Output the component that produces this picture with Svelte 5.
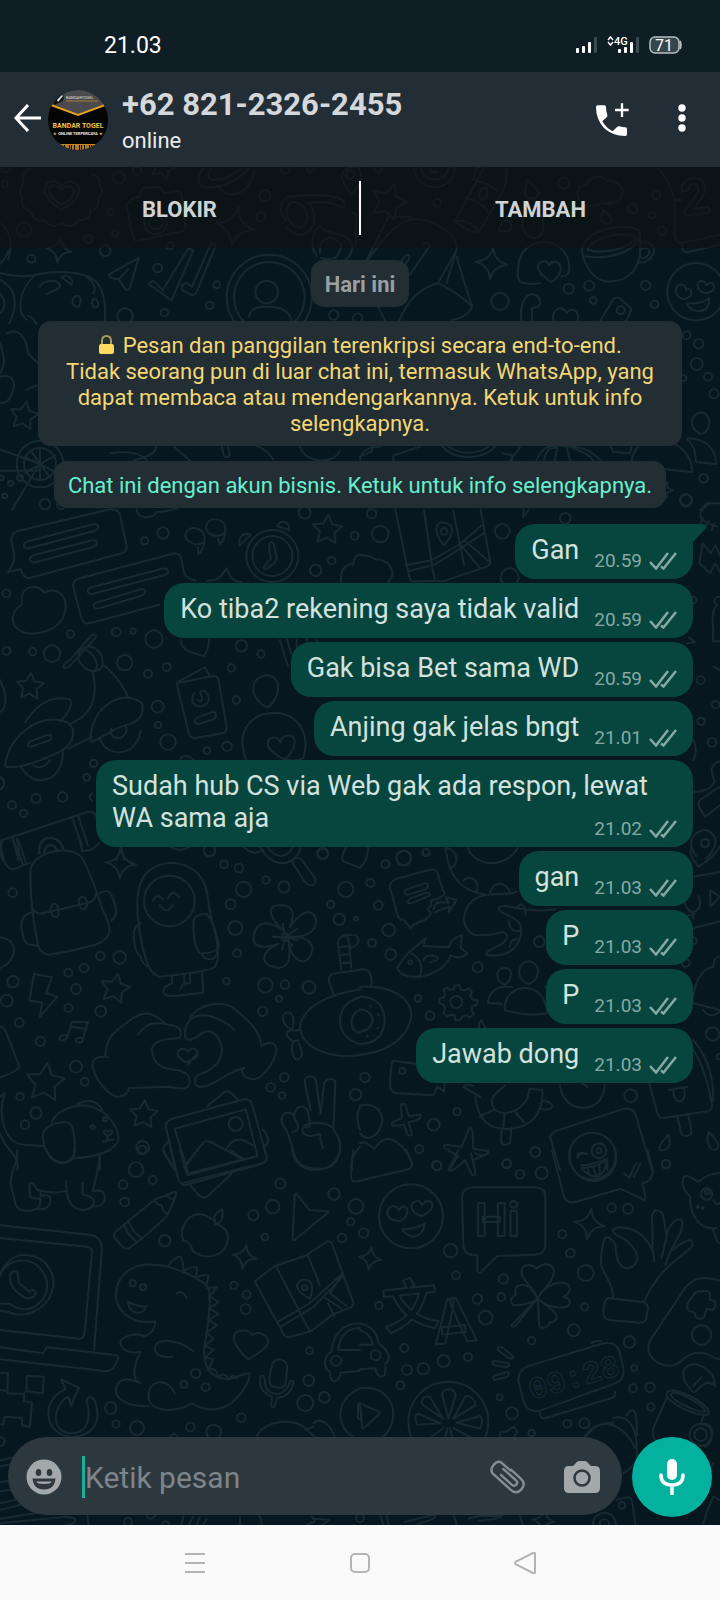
<script>
  let draft = $state('')

  const messages = [
    { text: 'Gan', time: '20.59', first: true },
    { text: 'Ko tiba2 rekening saya tidak valid', time: '20.59' },
    { text: 'Gak bisa Bet sama WD', time: '20.59' },
    { text: 'Anjing gak jelas bngt', time: '21.01' },
    { text: 'Sudah hub CS via Web gak ada respon, lewat WA sama aja', time: '21.02' },
    { text: 'gan', time: '21.03' },
    { text: 'P', time: '21.03' },
    { text: 'P', time: '21.03' },
    { text: 'Jawab dong', time: '21.03' }
  ]

  // Wallpaper doodles, grouped in tiles. Units inside a tile are a third of a pixel.
  // dots: [x, y, r], stars and sparkles: [x, y, r, rotation]
  const tiles = [
    {
      x: 0,
      y: 160,
      dots: [
        [15, 72, 9], [357, 53, 18], [411, 32, 12], [332, 156, 10], [72, 208, 21], [346, 220, 10], [265, 237, 12],
        [316, 272, 16], [94, 296, 12], [510, 257, 11], [473, 324, 13], [650, 374, 10], [629, 436, 11], [493, 458, 11],
        [375, 468, 23], [795, 107, 17], [782, 170, 13], [857, 28, 13], [932, 24, 12], [1050, 45, 12], [1001, 465, 14],
        [1073, 474, 14], [18, 22, 14], [467, 188, 34], [467, 188, 20], [800, 396, 34], [808, 412, 128], [808, 412, 106],
        [120, 912, 70], [120, 912, 48], [60, 954, 9], [32, 970, 8], [4, 954, 7], [14, 1008, 7], [135, 1032, 16], [184, 1034, 13]
      ],
      stars: [[72, 768, 44, 10], [490, 20, 40, 20]],
      sparkles: [[177, 270, 38, 8], [705, 200, 60, 10]],
      paths: [
        'M90 26C60 40 75 60 66 78c-14 20 4 32 0 46 -2 24 22 24 30 34 2 26 24 26 40 24 14 20 34 20 48 8 20 14 42 8 50-10 22 4 38-8 36-26 22-8 30-22 22-36 18-14 18-28 6-40 4-20-6-32-22-34',
        'M184 150c-30-20-52-40-50-64 6-28 36-28 50-8 16-18 46-18 54 10 0 26-26 46-54 62z',
        'M184 134c-20-14-38-28-36-46 6-16 26-16 36 2 12-16 34-14 38 2 0 18-18 32-38 42z',
        'M392 118l26-8 6-18q3-7 10-8l38-4q8 0 12 6l8 14 36-6q16-2 18 14l10 90q2 14-12 16l-128 28q-14 2-18-12l-18-88q-2-14 12-16z',
        'M610 26c-18 20-26 56 14 56 46 0 96-24 122-56M634 26c-12 16-14 34 10 34 30 0 50-12 80-34M650 78c40 50 106 20 112-48',
        'M416 294l-90 50q2 12 30 14l20 30q12 4 14-6zM356 358l28-30',
        'M446 372l14-10 28 28 78-126 14 8-66 150-26-20zM546 376l12-8 18 12 58-132 14 6-60 146-10 6-30-14z',
        'M746 470c10-34 40-30 60-30 30 0 60 10 68 40',
        'M0 340c40 10 80 12 120 2 40-10 100-8 140 6 40 14 60 60 54 134M0 312c10-10 20-26 26-40M0 190c30 20 40 60 24 110M0 360c40 20 60 60 28 130M0 400c16 20 20 40 0 60',
        'M100 350c-30 30-44 70-36 110l16 20M120 380c10-24 60-24 60 0-10 14-26 10-40 24M184 350c20-10 40 10 30 24zM218 418c10-20 30-10 22 14-8 20-26 4-22-14zM278 420c8-10 24 10 12 22-10 4-18-10-12-22M260 350c20 16 30 36 20 50M84 468c20 4 20 20 26 24',
        'M20 520c40-20 60 20 64 60 20 20 30 30 30 30M0 550c10 30 20 60 0 90M0 650c40-10 50 20 36 50 -10 24-20 30-36 30',
        'M80 690c10-8 20-10 34-14',
        'M0 868l120 44M0 932h114M116 916l-80 134M120 862v100M74 890l92 46M76 938l90-52M92 872l58 80',
        'M470 858c-6 30-40 34-70 44M330 880c60-10 90 0 110 20M520 858l50 44M666 862l6 26q8 8 18-2l-6-26M770 858c30 10 40 30 50 40M900 858c10 50 100 60 120 14M1080 900c0-20 20-40 60-40',
        'M860 180c-30-20-20-64 10-70 90-12 150 0 162 14 6 20-4 22-14 14-30-14-60-14-92-10 30 40 16 88-20 96-20 2-40-8-46-26M860 160c0-60 60-30 62 10 0 44-50 44-62-10M950 288c-20-30-18-70 10-90 8 30 100 10 96 70 -10 40-40 40-50 30M960 280c-6-50 40-60 64-26 -4 40-30 50-60 40M1054 160q16-6 14 14v84',
        'M1060 20c-50 10-40 40-6 84 30-30 36-60 20-84'
      ]
    },
    {
      x: 360,
      y: 160,
      dots: [
        [232, 128, 12], [611, 69, 17], [889, 106, 12], [818, 146, 14], [876, 166, 9], [906, 212, 13], [626, 386, 15],
        [688, 377, 15], [700, 421, 10], [857, 376, 14], [884, 433, 11], [420, 424, 26], [782, 451, 12], [1008, 395, 86],
        [980, 526, 12], [1016, 551, 14], [1010, 612, 18], [1044, 650, 12], [970, 654, 9], [1062, 701, 14], [1031, 955, 13],
        [978, 1019, 17], [53, 24, 12]
      ],
      stars: [[86, 126, 56, 18], [912, 990, 26, 20]],
      sparkles: [[395, 310, 48, 6]],
      paths: [
        'M162 24c8 76 118 76 122 0M182 24c10 46 74 46 84 0M214 24q-6 20 18 10M340 60c10-40 10-40 20-40M440 24c0 60-10 70-30 100l-52 92q-8 12-74-32l90-164M346 62c30 4 50 16 68 32M316 114c30 6 54 20 68 42M284 186q12-10 40 2t30 30M370 84c20-6 14 34-4 36-14-4-8-30 4-36z',
        'M500 58c20 20 38 30 36 44-10 20-36 18-40 0-2-16 6-30 4-44zM440 176c-30 30-30 40-6 38 24 0 28-20 6-38M500 150c-30 50 0 84 20 84 30 0 40-40 20-74M730 150c30 24 28 42 10 42-20-4-20-22-10-42z',
        'M670 136c-30-30-20-60 10-60 10-34 50-30 60-14 60 0 60 60 20 68-20-10-50 16-90 6zM760 130c-20 10-30 0-36-6',
        'M890 24c30 20 50 80 54 100v100q4 30 26 24l110-24M944 120h20M964 250q4 30 20 26l96-22',
        'M24 300c40-60 90-120 140-124q60 6 100 40 30 20 26 54l-56 100q-80 20-116 112M54 440l20 40M288 274l-28 96M290 290q30 100 46 150-10 30-60 40M236 370q60 30 96 66M190 252q20-6 20 4l-60 88M144 284q10 6-2 20l-20 32q-8 6-10 0l16-40q8-12 16-12M20 300l66-130h70',
        'M474 330c0-110 148-110 154-10 2 20-10 30-24 30M480 366c-8-10-8-20-6-36M480 366q30 10 60 4M574 366c-30-20-50-40-36-56 10-10 24-10 30 6 10-20 34-10 34 10 0 18-12 30-28 40z',
        'M666 272c0-70 160-90 174-54 4 46-80 86-172 70zM682 270c10-40 120-60 146-36-20 30-90 50-146 36zM668 288c20 60 50 80 90 76 50-4 80-40 82-90v-50M836 256c20-20 54-4 44 26-10 20-30 30-44 24M840 270c16-12 34-4 26 14-8 10-20 14-26 6z',
        'M484 480c-8-90 50-90 56-56 6 14-10 20-24 20v36M580 480c-10-30 30-50 40-20 10-20 40-10 34 20M720 484l40-66q8-8 18-4l30 26q8 6 4 14l-14 30',
        'M948 384c10-18 30-10 30 6 16-10 20 10 12 20l-18 8c-16-4-28-16-24-34zM1012 374c6-18 24-12 28 2 12-16 26-4 20 14l-20 10c-14 0-26-10-28-26zM980 430q40 4 68-16 0 38-30 40-30-2-38-24z',
        'M1020 758c20-4 30 20 28 34-4 20-16 30-26 30-16-4-28-24-26-38 2-14 10-24 24-26zM980 836c50-6 90 30 88 76l-60-6c0-26-8-54-28-70zM814 904c10-60 60-70 90-60M904 844c50 0 94 40 92 92l-120-12M752 860l8 16 50 4 4-18',
        'M530 900c20-50 50-46 100-40 50 0 70 20 90 40M552 900c10-40 20-36 40-36l-8 36M620 864l10 36M640 866c20 4 50 20 60 36M246 858c40 50 130 40 160 0M264 858c40 30 90 24 124 0M480 862l-30 40M426 880l30 4v18M100 900v-14l80-26M0 890l36-16v-16M50 980v-40l40-20M1020 1050l20-20h40'
      ]
    },
    {
      x: 0,
      y: 500,
      dots: [
        [489, 99, 17], [434, 122, 11], [914, 38, 18], [1064, 107, 12], [947, 211, 17], [995, 182, 11], [19, 280, 12],
        [211, 402, 11], [349, 396, 13], [399, 393, 8], [462, 417, 26], [19, 453, 12], [98, 455, 11], [156, 461, 25],
        [374, 488, 23], [444, 521, 12], [500, 502, 12], [724, 438, 17], [783, 462, 11], [694, 504, 11], [709, 600, 11],
        [473, 620, 18], [474, 675, 10], [504, 726, 23], [621, 752, 10], [681, 739, 14], [281, 790, 11], [260, 832, 10],
        [36, 916, 12], [108, 895, 14], [188, 891, 14], [71, 940, 11], [817, 168, 78], [817, 168, 60], [629, 1052, 17],
        [968, 1060, 16]
      ],
      stars: [[982, 90, 46, 4], [90, 560, 42, 4]],
      sparkles: [],
      paths: [
        'M50 94l280-66q24-2 30 16l20 94q0 16-14 22L88 234q-16 4-26-26l-38 8q22-30 18-54l-8-44q2-18 16-24z',
        'M84 124l190-50q22-4 20 8 0 8-14 12l-190 50q-16 4-18-6t12-14zM100 166l170-44q22-4 20 8 0 8-14 12l-166 44q-16 4-20-4t10-16z',
        'M234 236l290-76q18 0 20 18l8 40q10 20 34 24M234 236q-18 8-14 26l24 92q6 20 24 16l210-56M276 262l210-56q18-2 18 8t-14 12l-204 54q-18 6-22-4t12-14zM290 308l130-40q16-2 16 6t-14 14l-122 36q-14 4-18-4t8-12z',
        'M66 314c-10-60 50-66 66-36 40-20 70 10 64 50-4 50-60 76-114 72-50-8-60-60-16-86z',
        'M612 126c-30 20-62-10-56-24 14-30 54-20 58 12 0 24-10 44-20 48v-20M676 96c-20 20-58 10-58-14 4-34 50-30 58 0 2 24-6 46-18 50l-4-16',
        'M810 128q8-6 12 8l6 28q6 16-8 28l-22 16q-10 0-6-8l20-24-4-28q-2-12 2-20zM832 78c10-20 36-16 36 12zM720 136c-6-26 10-40 32-32zM410 28c0 30 50 30 60 8 20 0 40-4 60-10M620 242c40 0 40-10 60-38 8 26 16 40 44 42M1024 250c-6-50 20-60 36-56 0-20 10-30 20-30',
        'M544 430c8 26 40 30 68 38q14-20 16-52M544 430v-10M840 420l24 80M860 416l14 44M890 420v20M920 416v16M950 420v16',
        'M284 404q10 6-6 18l-66 74q-20 16-22 2 4-10 20-18l64-74q6-4 10-2zM240 452c30-30 70 0 68 40-4 24-30 28-50 14-20-14-30-34-18-54zM254 448c30 14 50 50 26 68M308 494c30 20 60 60 78 100M278 512c14 60 10 130-66 158M272 720c-4-90 90-160 154-110 10 40-20 60-50 66-40 10-60 36-104 50zM300 712c10 60 110 66 122-20M334 686c-10 34 40 40 46 4 0-6-2-12-6-14M16 794c10-80 90-150 170-132 50 10 40 70-4 92-50 24-110 50-160 48q-8-2-6-8zM76 666c40-60 80-80 134-68 10 20-10 50-30 66M64 802c40 70 130 40 124-50M100 796c20 14 40 0 50-16M206 746l70-36M90 724l56-20q10 0 8 8l-2 8-58 20q-10 2-10-6z',
        'M536 544l78-42 16 26M530 550l110-22q14 0 16 14l24 140q0 14-12 18l-82 14q-16 0-20-16zM582 580c-10 20-6 38 20 40 26-4 30-26 16-44-14-10-20 0-14 12 10 14-8 20-12 10M592 652l46-16q10 0 10 10 0 8-8 12l-44 14q-12 0-12-8 0-8 8-12z',
        'M796 526c60 0 40 80 6 96-40-14-68-80-6-96zM738 778c-34-90 20-140 90-140 80 6 100 80 82 136q-20 12-58 4M852 778c-36-20-60-40-44-60 14-12 30-4 32 10 8-26 44-30 44-2 0 20-14 40-32 52zM540 778q10-20 40 0',
        'M0 540c14 30 20 60 14 76q-4 16-14 20M0 830q18 14 10 30-4 6-10 8M8 1020l254-84q20-2 26 10l10 40M8 1020q-12 40 0 60M50 1016l12 64M36 1010l20 70M216 950l30 90M234 946l30 90M120 1060c-14-60 60-60 68-14M134 1060c0-30 30-30 36-10M350 1080l12-36 10 36M276 880q-14 10 0 24'
      ]
    },
    {
      x: 360,
      y: 500,
      dots: [
        [35, 41, 14], [61, 102, 25], [427, 94, 22], [616, 55, 16], [449, 232, 27], [978, 2, 18], [252, 94, 10],
        [1022, 541, 12], [1023, 664, 11], [1067, 614, 11], [1056, 727, 13], [1036, 1029, 12], [131, 1074, 22],
        [198, 1056, 10], [1000, 300, 10]
      ],
      stars: [],
      sparkles: [],
      paths: [
        'M106 28l42 204q4 14 16 12l92-2 124-42q14-6 10-18L362 28M138 196l78-16 84-48 70-60M144 214l80-20 80-50 70-46M192 30l26 180 8 34M280 34l32 160M300 132l60 72M316 124l70 60M252 136c-40-50-20-70 0-68 30 2 34 30 0 68z',
        'M0 166c40-4 50 20 54 12 50 10 50 50 30 68M490 28v24l16-22',
        'M1022 40c-6 20 20 30 50 40M1050 10q-20 10-28 30M1030 54l-14 24M1046 64l-10 20M1062 72l-8 20M1028 130l-10 60 32 30 16-30 14 26M1028 130l24 30 14-24 14 30M1080 290c-20 0-20 20-10 24-20 30-10 60-10 80l-2 30h22M1060 500l20 10M1080 784c-40 10-20 50-16 60-20 40-70 30-64 30M1080 860l-60 40q-6 4-4 20l20 30 44-34M1000 780c10-20 10-40 0-60M980 430l26-4-20-14M1010 1070c-40-50 0-80 30-80 40 20 30 50 0 86'
      ]
    },
    {
      x: 0,
      y: 840,
      dots: [
        [628, 32, 17], [672, 73, 12], [717, 84, 13], [798, 120, 11], [852, 141, 17], [968, 42, 16], [1037, 148, 23],
        [731, 148, 23], [692, 193, 15], [706, 264, 21], [711, 340, 12], [679, 424, 10], [992, 193, 11], [1018, 238, 17],
        [1068, 236, 6], [38, 158, 13], [301, 348, 13], [359, 352, 19], [252, 384, 13], [205, 398, 12], [39, 425, 17],
        [228, 447, 15], [20, 482, 18], [205, 504, 12], [302, 514, 16], [58, 548, 13], [121, 604, 14], [228, 680, 18],
        [254, 725, 12], [60, 770, 11], [108, 819, 17], [75, 854, 13], [796, 436, 22], [855, 434, 13], [927, 442, 19],
        [837, 476, 9], [788, 514, 14], [853, 712, 13], [812, 742, 13], [846, 767, 10], [1067, 764, 17], [428, 922, 19],
        [278, 862, 6], [315, 838, 6], [508, 183, 76], [856, 292, 12], [707, 852, 21]
      ],
      stars: [[345, 446, 46, 12], [136, 728, 60, 6], [431, 824, 44, 4]],
      sparkles: [[362, 70, 46, 4]],
      paths: [
        'M92 88q10-40 70-54 60-10 84 20 20 30 60 150 30 60 20 80-10 20-40 30-70 20-140 30-30-4-34-40-24-120-20-216zM98 206q10 16 30 14l130-30q30-6 30-30M104 216q-40 4-40 40 4 60 30 58l20 4M300 160q30-20 40 20 20 40-6 62M152 208q0-16 12-16 10 0 12 20t-10 20q-12-4-14-24zM236 186q0-16 12-16 10 0 14 20-2 18-12 18-12-4-14-22zM0 292q40 4 42 40-6 40-42 52M0 0q10 90 40 88l50-20M40 0l30 76M56 0l22 70M116 40c0-60 60-60 74-14M132 38c4-30 30-30 42-4M240 0l6 32q30 4 50-22',
        'M420 280c-20-120-10-204 94-212 80 4 110 60 112 130l22 90q14 60-2 92-20 16-170 30-20-10-26-24-20-40-30-106zM422 250q-26 10-20 50 4 40 20 50 4 20 20 28M580 250q0-30 40-28 20 20 38 96-8 22-56 22-20-10-22-90zM606 340q0 18 30 18 20-10 16-40M516 410v20q-30 10-26 30 10 10 30 8l90-10-4-66M552 406l2 26M570 404v26q-26-4-28 16M458 182q14-24 30-4M504 176q10-30 34-6M480 196q20 30 38 0',
        'M780 20c30 60 100 70 122 4M800 20c30 40 60 34 80 0M730 20q30 30 60 10M882 56q14-6 24 4l40 56q4 20-14 20-10 0-20-14l-34-54zM1040 20q-20 30-10 44l50 20M510 20q30 20 60 0',
        'M846 268c-50-50-40-74 0-72 40 4 36 30 24 66 40-60 70-50 76-30 10 50-40 60-72 58 60 0 70 30 60 50-20 50-60 14-68-32 10 60-10 80-40 74-50-10-40-50 8-70-60 20-80 0-72-30 10-50 60-30 84-14zM856 292l-8-40M856 292l36-26M856 292l38 8M856 292l20 24M856 292l-10 38M856 292l-38-2',
        'M102 402l54 10-18 48 34 10-52 60 6-42-38-6zM216 546h48l-18 60q-20 6-18-8 6-6 20-4M216 546l-14 44q-10 18-24 8-2-12 20-12M214 560l42 6',
        'M0 560q10 0 20 20l38 100q0 10-58 32M14 760c-20 60-6 150 60 154l60 4M14 760q-6 6-14 10M0 880c20 60 60 60 52 110',
        'M324 652c-20-4-50-4-46 30 10 40 50 90 80 88 34-6 26-30 30-26l120-4q60 14 60-10 6-34-40-40-70-4-72-60 0-30 60-34 30 4 26-20-2-20-50-24M316 646c6-70 40-76 80-110 50-30 70-10 98 12 M494 550c-40 0-50-4-80 34M590 650c-40 28-40 12-56-2-6-20 20-30 30-12 10-20 36-10 26 14zM592 640l-28 32',
        'M570 534c30-50 110-50 130-30 50 40 80 70 84 114 30-20 50-6 44 20-10 40-50 90-80 78-20-6-30-30-14-32-60 10-90 60-140 56-14-10-14-30 10-40 40-10 70-50 60-84-10-40-40-50-60-36-20 20-50 30-50 0 10-90 110-50 150-10',
        'M154 848c20-46 100-70 150-34 20 10 60 60 50 90-20 40-90 50-132 50M232 792q50-24 76 18M128 890c0-40 70-50 80-40 20 20 20 90 8 110-40 24-80 0-88-70zM310 876q10-10 14 0 12-10 12 0-4 12-14 12zM322 888v10q-4 10-12 6M322 898q8 6 18 0M298 946l2 44',
        'M512 838l220-60q20 0 24 14l44 160q0 14-14 18l-240 60M512 838q-18 8-14 26l34 140M524 866l214-58 34 140-200 50M524 866l40 130M552 980l60-74q10-6 20 0l100 54M680 926c20-40 50-30 78-10M620 800l54-44q10-6 20 4l20 20M788 868q20 20 16 40l-10 10M504 906q-20 20-14 30l34 54',
        'M932 810l-18-84c0-22 30-20 34-4l14 100 10-90c4-20 36-20 34-2l-6 140c40 40 20 120-40 116-60 0-74-20-82-60l-16-50c-40-50 0-70 20-50 10-40 40-30 44 0l4 30q-4 10-20 4M914 856c20-10 60-10 80 4M908 866q-4 20 24 22l30-6q-4 20 8 42M878 876q20-4 16-20l-14-30',
        'M1024 390l-10-80q0-20 24-24 30-4 34 4 10 20-10 30l-14 4 6 60M1020 322l28-4M1020 346l30-4M1024 370l30-2M1042 290l8 30M1000 462l-14-40q0-20 20-22l74-10M1080 448c-90 14-170 50-180 110 0 60 80 100 180 88M1080 472c-80 20-80 120 0 140M1080 510c-34 14-34 60 0 70M896 600c-20 10-40-10-34-24 10-10 20 0 34-6M876 570c-40-20-30-60-6-52 16 10 10 40 6 52zM880 606c-10 20 0 50 10 52 20-4 20-20 6-48',
        'M1080 800q-16 30 0 70M1080 920q-30 30-24 70'
      ]
    },
    {
      x: 360,
      y: 840,
      dots: [
        [131, 54, 22], [76, 73, 12], [198, 38, 11], [31, 129, 12], [55, 196, 13], [86, 270, 19], [36, 309, 12],
        [92, 343, 16], [151, 367, 6], [353, 382, 15], [538, 305, 16], [174, 475, 10], [210, 527, 13], [289, 486, 18],
        [127, 692, 9], [15, 712, 14], [291, 815, 11], [221, 854, 18], [178, 928, 12], [230, 976, 14], [526, 936, 15],
        [440, 970, 13], [812, 767, 19], [1058, 582, 20], [918, 972, 12], [1078, 650, 8], [977, 369, 12], [697, 948, 70],
        [717, 932, 22], [717, 932, 7], [1034, 10, 12], [1000, 302, 10]
      ],
      stars: [],
      sparkles: [],
      paths: [
        'M24 22c0 30-10 50-24 60M256 24c10 80 40 130 124 140 60-4 80 0 90-10M324 24c20 60 120 60 148 0M262 24c40 10 30 60 6 60M310 122c20-20 50-4 40 36M390 162c4-40 50-40 60-4M380 164c-70 10-90 90-40 120 60 10 90-20 100 0 10 30-60 40-62 60 50 10 106-10 106-80-10-40-70-40-68-60 20-20 80 20 170 4M446 240c0 30 20 40 36 30M470 204c10-20 30-10 26 24M450 320q0-20 20-24',
        'M106 118l108-30q14 0 18 10l16 50q10 14 0 20l-20 10q-20 0-14 20-20 10 0 20-10 20-26 24l-24 10-12 12-22-26q-10 4-16-10l-24-84q-2-18 16-26zM140 148l54-18q10-2 10 6t-8 12l-50 16q-10 2-12-6t6-10zM150 176l50-18q12 0 10 8l-56 24q-10 2-10-6zM220 208c10-30 20-20 46-20l-10-16 34 8-24 36 2-16-44 16',
        'M112 384c20-40 50-60 86-90l-8 24 76 4q10-30 40-36l-4 38 20 16q-20 20-50 6-20 50-90 64-60 4-70-26zM154 340c40 20 30 60 24 68M190 360q10-20 40-10 10 10-6 12l-14 6',
        'M434 384c30 2 20 40 0 50-30-10-30-50 0-50zM506 364c40 6 36 56 0 68-40-14-36-64 0-68zM434 510c-6-80 120-100 128 10q-60 10-128-10zM456 442c-50-10-70 20-72 46l42 4M556 440l10 14',
        'M270 450l12-2 2-12h14l4 12 12 4 12-8 10 12-6 12 10 12h12v14l-14 4-4 12 8 12-12 10-12-6-12 4-4 10h-16l-2-14-12-2-12 6-10-12 6-12-6-12-12-4v-14l14-4 4-10-6-12 10-8z',
        'M0 388q40-4 34 50M0 440c90-4 154 30 154 88-10 70-80 110-154 116M0 470c40 0 74 20 74 72-4 50-34 70-74 70M0 508c50 4 50 60 0 68M30 498l4 4M54 522l2 4M54 562l-2 4M24 588l-4 2',
        'M100 662q-8 4-10 80 4 16 20 18l110 6 12-26 20 14 4-40M100 662l90 12M356 566q0-20 8-26l12 24M310 740q20 14 50 30M310 740q10-10 30-2M346 770c10 90 60 100 110 96 60-10 90-40 92-110M396 776c-10 70 110 50 112-30M358 830l44-22M430 866l4-44M492 846l-26-30M546 750l-38-4M424 868v40q10 14 26 0l4-44M546 792q-14 16 6 16 20 4 26-10-10-16-30-16M396 776q10-20 40-40M600 736c10 90 130 90 134 0M656 724l26 16',
        'M126 834l-4-40q8-4 14 0l10 34 36-4q2 10-8 14l-28 10 10 34q-4 8-14 2l-10-30-34 4q-8-8 6-14zM0 796q60-10 68 44-10 50-46 54-14-4-22-14M0 910l14-4 30 20q20-30 40-30 50 10 74 80',
        'M328 866q10-6 10 20l2 40 42 6q6 10-10 14l-34 14 8 30M328 866l-24 54-50-6q-8 6 6 14l34 20-26 42',
        'M570 890q6-14 26-20l190-62q30-8 40 14l50 168M570 890l30 100M652 946q10-14 28-4M664 976q30 0 78-20v34M820 980l10-10',
        'M868 730l24 90q6 14 20 14l130-20q14-4 14-20-20-120-70-184M926 750l56-10M940 750q0 34 20 34 20-6 12-40M952 830l12 50q10 14 26 4 6-4 4-14l-10-48M1000 600c50 60 60 120 60 184M926 884c-40 40-30 50-12 46 20-10 16-26 12-46zM1046 876c40 40 30 50 18 54-20-4-26-30-18-54z',
        'M970 170q10 50 30 46 30-10 16-48M1000 216v20M984 226l20-4M1050 150l30 20-28 30zM1000 110l80-14M1000 264l80-20M1000 470q10-80 60-90 0-30 20-30M1000 490l80 20M1030 510q20 30 50 4M994 20c-10 30 10 40 20 60 40-20 50-40 66-60'
      ]
    },
    {
      x: 0,
      y: 1150,
      dots: [
        [427, 0, 13], [408, 59, 22], [369, 104, 13], [458, 90, 12], [374, 156, 13], [494, 272, 17], [841, 101, 15],
        [818, 170, 20], [760, 196, 15], [795, 261, 10], [1002, 132, 17], [1068, 169, 22], [1052, 215, 11], [1026, 264, 13],
        [702, 406, 11], [740, 434, 12], [737, 478, 15], [398, 400, 9], [429, 411, 9], [587, 670, 14], [552, 703, 11],
        [617, 712, 12], [332, 774, 17], [348, 822, 11], [411, 834, 21], [571, 831, 13], [641, 846, 22], [724, 803, 13],
        [926, 691, 16], [916, 759, 24], [973, 742, 16], [928, 602, 10], [1008, 632, 15], [914, 413, 8], [0, 874, 14]
      ],
      stars: [],
      sparkles: [[733, 320, 36, 10]],
      paths: [
        'M52 0c0 50-20 60-20 100l14 60q6 26 40 22 40 0 34-36l-30-4-2-42q10-6 24 20 40 12 84 4M122 124v14q40-10 26 26-6 14-30 14M198 94q0 84 50 86 30 0 34-24-4-20-34-22v-34M300 20q-10 60-22 104 40-10 36 24-4 20-32 22M140 0c20 50 80 50 84 0M220 24q60 0 110-24',
        'M490 0l34 60M512 0l24 92q8 16 24 12l230-64q12-6 10-20l-6-20M540 0l22 76 210-58-2-18M556 50l36-50M690 0l40 26M572 106l26 32q14 8 26 0l70-66',
        'M876 0c10 80 130 80 144 0M1060 0q-14 90 0 94h20M884 134q6-8 8 0l36 46 50 4q12 0 4 6l-96 78q-8 6-8-4z',
        'M462 150l60-24q8-2 6 10l-26 60q-60 60-114 98-12 4-20-4l-24-26q-4-12 4-20zM462 150q10 16 22 16l8 18 10 10M372 224q10 30 36 50M386 216q12 30 36 46M500 134q8 14 20 12',
        'M640 210c-60-50-110 20-90 60 20 6 24 20 30 34 40 30 100 14 104-40 0-20-10-34-34-42zM646 214c-10-20 10-30 20-36 6 20 0 40-20 46z',
        'M0 226l270 28q34 6 36 40l-24 306M0 264l260 26q18 2 16 16l-22 240q-2 20-16 20L0 540M0 592l130 18 10-18 200 22q16 0 14 12-10 34-34 38L0 628M0 460c-10-10-14-30-8-50 10-80 60-100 90-94 60 4 90 60 74 110-20 60-90 80-130 60l-26-4M0 376c20-50 90-60 120-20 30 30 30 80-10 110-30 20-60 10-80-4l-40-2M32 372c10-16 24-4 22 4l2 22 30 26 14-4q14 8 2 20-20 10-30 2-50-30-40-70z',
        'M506 348c10-20 30-30 36-28q10 20 8 44M550 364q30-20 42-10l-4 30M590 384q20-14 36-6l-8 28M622 414l28-2-22 30M628 438l28 18-28 20M630 476l26 16-30 18M626 510l24 16-28 20M620 548l20 18-22 20M614 586l26 14-24 22M612 622l28 6-16 30M622 660q20-10 30 10v12M652 682q20-20 34 6M686 688q14-20 26-4',
        'M466 514c-60 10-110-20-118-70-4-60 40-104 110-100 60 0 170 50 170 80 6 60-10 130-16 180 0 50 20 80 70 84 34-4 50-20 64-18 10 10-20 70-60 94-40 24-80 14-110-4-60 34-140 24-130-34 10-40 60-40 78 4M446 768c-80 4-110-34-94-64 10-20 40-20 70-4-30-10-20-60 0-94-40 6-64-10-60-34 20-24 60-20 74-12 20-10 30-26 30-46M384 456q30 14 56 14-10 20-30 18-24-6-26-32zM530 430q20-10 30 14M580 604c-50-40-110-40-116-10 0 20 20 30 52 26',
        'M764 394l60-46 90-30 68-44q10-2 14 8l64 176q2 10-8 14l-54 22-66 50-66 18q-10 0-14-8zM836 514l90-52 96-86M842 530l100-60 84-88M830 352l98 190M924 316l36 90M984 460l20 40M970 440l54 36M990 430l50 38M992 428l34-56M930 446c-60-30-40-60-10-56 20 6 20 30 10 56z',
        'M744 628c-40-40-50-60-38-80 20-10 40-10 50 8 20-16 50 0 48 24-10 20-30 30-60 48zM818 640q20-24 40-2l4 14-6 54q-14 14-44 0-10-14 6-66zM782 680q10-10 12 10 0 40 38 42 30-4 38-38 12-6 10 6-10 40-48 44l-10 28q-8 0-8-8l2-24q-38-14-36-48 0-6 2-12z',
        'M1080 520c-60 0-80 40-86 84-30 20-20 60-4 60l2 20q10 20 26 0l4-16 58-6M1080 534c-40 0-60 24-66 66h66M1080 716c-80 30-70 120-20 144M1080 760l-6 4v40l6 4',
        'M0 668l24 2-2 52-22-2M80 678l52 2-4 50-48-6zM22 722v8l50 2v22l24 4-6 72-24-4v-22l-52-4-4 24-10-2M72 732l4-8M184 688l54 26-12 20-12 34-10-28c-50 30-50 110 10 110 50 0 60-50 46-96 0-20 20-14 26 2 20 60-10 104-70 104-80 0-100-110-20-142z',
        'M770 860c20-50 120-60 150-20l24 20M940 830l-24 10M940 820c20-20 50 0 64 40M510 860l12-10 12 10'
      ]
    },
    {
      x: 360,
      y: 1150,
      dots: [
        [153, 199, 96], [11, 249, 14], [231, 47, 13], [526, 6, 14], [440, 42, 13], [480, 73, 13], [545, 69, 18],
        [272, 302, 20], [288, 376, 12], [430, 387, 14], [424, 441, 12], [352, 447, 14], [377, 503, 21], [57, 467, 11],
        [133, 594, 12], [251, 633, 18], [324, 621, 12], [141, 660, 15], [190, 656, 17], [121, 706, 12], [47, 616, 15],
        [515, 572, 11], [607, 253, 12], [631, 309, 13], [677, 369, 24], [674, 471, 11], [641, 541, 18], [808, 576, 17],
        [755, 173, 13], [804, 176, 15], [918, 43, 13], [822, 654, 9], [819, 715, 12], [870, 712, 14], [873, 771, 11],
        [456, 790, 18], [419, 742, 9], [622, 821, 12], [673, 820, 15], [515, 849, 10], [1025, 555, 29], [1040, 132, 17],
        [1042, 126, 7], [1022, 854, 33], [1022, 854, 19], [265, 815, 120], [717, 2, 22], [1028, 174, 3], [1014, 172, 3]
      ],
      stars: [],
      sparkles: [[688, 222, 46, 8], [30, 325, 34, 8]],
      paths: [
        'M0 92l150-36q10-10 0-30L140 0M265 60l30-60M265 60q10 10 50-30l20 44q12 6 10-14l-12-50M345 10q40 16 40-10',
        'M82 186c4-24 30-20 34-4 10-20 26-14 26 4-2 14-14 24-22 28-26-4-38-10-38-28zM154 170c6-24 28-20 32-4 14-22 34-14 30 6-4 14-20 20-30 26-20-6-30-14-32-28zM126 236q30 4 68-14-4 34-34 38-24-4-34-24z',
        'M336 112h194q26 4 26 28v148q-4 26-30 26l-114 4q-30 30-52 50-8 2-8-8v-44q-40 2-42-30l-4-146q4-26 30-28z',
        'M576 0l36 140q8 22 34 16l136-40 70 34q10-4-6-50 40-10 30-50L862 0M630 0c-10 60 40 96 74 94 40-4 74-40 62-94M652 24q10-20 28-12M664 54q40 0 78-24-10 50-36 50-24-4-42-26zM684 56l4 16M700 54l8 24 12-8-2-24M792 70l16 14 16-38M822 80l20-40',
        'M1015 96q-40-30-46-10-6 30 20 52M1014 96q30-26 66-26M990 140c0 60 30 100 80 94M1060 150q10 20 20 8M1060 240q10 40 20 40',
        'M758 240c20-20 80 0 100 30 20 24 26 40 24 66M758 240c4 20 34 20 50 40 30 30 30 50 10 70-40 20-50-30-50-50 0-30-30-50-36-30-10 34-10 60-8 80 20 40 34 60 36 94M878 300l-2-100c4-30 30-20 34 0l10 60c-6 20-10 50-16 64M920 250c20-50 46-50 48-30-2 40-40 70-52 126M940 300c30-30 60-40 58-14-20 30-100 60-146 170M748 444l100 12q16 4 16 20l-6 32q-6 12-20 10l-90-8q-20-4-18-26l4-26q4-14 14-14z',
        'M532 446c-10-40-60-60-44-92 10-14 30-10 42 2 20-20 50-16 52 8-4 40-34 50-50 82zM532 446c-20-40-40-50-62-36-10 14 0 20-4 26-14 6-20 20-4 30 30 0 60-10 70-20zM532 446c20-40 70-60 94-40 10 20-6 30-16 34 20 4 26 20 10 30-40 10-70-10-88-24zM532 446c40 30 60 40 58 60-10 14-20 10-22 12 0 14-20 20-30 10-4-30 0-60-6-82zM532 446l-76 78q-2 10 10 4l66-82',
        'M1080 392c-60-20-90 0-110 30l-100 150c-20 50 30 80 70 74 30-10 40-40 80-38 30 0 40 20 60 20M1004 430q8-10 20-4 6-6 20-2 10 8 4 24l16 6q6 10-4 26l-20-4-6 20q-4 16-26 6l-4-14-18-6q-10-10 0-26z',
        'M500 650l230-70q40-6 48 24l12 50q6 34-24 46l-226 82q-38 8-50-30l-14-56q-4-30 24-46zM540 788q0 20 16 16l200-60q14-6 8-20M696 580q4-10 26-6M414 592q6-4 12 0l30 24q6 6 0 10-8 0-14-4l-26-20q-6-6-2-10zM400 632l40 6q8 2 8 8-4 6-12 6l-34-6q-8-6-2-14zM402 678l38-12q8 0 6 8-2 6-8 8l-34 8q-8-4-2-12z',
        'M265 806l-18-70q0-14 12-18h14q12 4 14 18zM250 806l-60-40q-8-10 0-22 8-8 20-2zM242 820l-70 4q-6-8-6-20t10-12zM250 834l-40 30M280 806l36-66q8-6 18 4 14 10 12 22zM290 818l70-20q6 4 6 16 0 14-6 22zM280 834l56 30M262 834l-8 40M270 834l10 40',
        'M1006 726c20-20 34-40 60-18l-8-32c-50-60-110-30-80 24l20 26M1000 708l24-26M920 728c-10 30 110 80 126 64 10-30-110-90-126-64zM932 732c0 20 90 60 104 52-10-24-90-66-104-52zM920 744l-40 90q-6 30 10 40M1032 794l-10 30q34-10 34 30 0 24-20 36',
        'M670 864c40-60 110-60 156 30M680 858c30-40 60-40 80-40M760 804c40-10 70 20 70 90M800 796q20-30 28 0l4 60M420 860q-4-20 18-14l24-16 10 16-14 20M0 520c40 10 50 30 56 60 30 20 40 50 20 60v30q-14 20-26 0l-4-16-46 4M0 540c30 10 36 30 38 44H0M0 714c80-10 120 60 90 120-10 20-20 26-30 30M0 760l56 24q8 4 0 10l-44 40q-6 4-6-4z'
      ]
    },
    {
      x: 0,
      y: 1420,
      dots: [[0, 65, 13], [384, 306, 12], [497, 314, 10]],
      stars: [],
      sparkles: [],
      paths: [
        'M0 122l42-10M0 140l34-8M0 186l28-4M0 214l32-4M0 250l52-12M0 270l70-18M0 310l200-20q30 4 26 12-4 10-24 12M0 296l130-20M262 288l4 26M440 286q10 20 26 0M550 290l-6 24M580 290l-14 24M600 290l-10 24M620 296l-10 18M720 290v24M776 286q10 10 8 28M936 290l8 14-20 10M944 296l44 4-20 14'
      ]
    },
    {
      x: 360,
      y: 1420,
      dots: [[786, 256, 10], [733, 312, 34], [733, 312, 14], [0, 294, 12]],
      stars: [],
      sparkles: [[550, 302, 34, 6]],
      paths: [
        'M62 288l8 26M80 288l6 26M134 306l86-22q10 4 0 12l-50 18M282 288l8 26M326 296l30-8h70q0 8-70 14M480 288l8 26M770 240l30-8q14 0 16 10l10 72M830 90q10 40-40 70M1060 130l-20 30M1080 240l-20-10q-20 40-30 80'
      ]
    }
  ]

  function point(cx, cy, r, deg) {
    const a = ((deg - 90) * Math.PI) / 180
    return `${(cx + r * Math.cos(a)).toFixed(1)} ${(cy + r * Math.sin(a)).toFixed(1)}`
  }

  function starPath([x, y, r, rot]) {
    const pts = []
    for (let i = 0; i < 10; i++) {
      pts.push(point(x, y, i % 2 ? r * 0.5 : r, rot + i * 36))
    }
    return `M${pts.join('L')}z`
  }

  function sparklePath([x, y, r, rot]) {
    let d = `M${point(x, y, r, rot)}`
    for (let i = 0; i < 4; i++) {
      d += `Q${point(x, y, r * 0.2, rot + 45 + i * 90)} ${point(x, y, r, rot + 90 + i * 90)}`
    }
    return d + 'z'
  }
</script>

{#snippet bars(heights)}
  {#each heights as h, i}
    <rect x={i * 6} y={17 - h} width="3" height={h} rx="1" fill="#fff" opacity={i === 3 ? 0.2 : 1} />
  {/each}
{/snippet}

<div class="screen">
  <div class="status">
    <span class="clock">21.03</span>
    <div class="status-icons">
      <svg width="22" height="18" viewBox="0 0 22 18" aria-hidden="true">{@render bars([5, 7, 11, 16])}</svg>
      <svg width="33" height="18" viewBox="0 0 33 18" aria-hidden="true">
        <path d="M1 4l2.500-3 2.500 3M1 6l2.500 3 2.500-3" fill="none" stroke="#fff" stroke-width="1.500" />
        <text x="7" y="9" class="net">4G</text>
        <g transform="translate(11 0)">{@render bars([4, 6, 11, 16])}</g>
      </svg>
      <svg width="33" height="18" viewBox="0 0 33 18" aria-hidden="true">
        <rect x="1" y="1" width="29" height="16" rx="5" fill="#37454c" stroke="#b9bfc2" stroke-width="1.500" />
        <path d="M31 5q1.500 4 0 8" fill="none" stroke="#b9bfc2" stroke-width="2" />
        <text x="15" y="15" text-anchor="middle" class="charge">71</text>
      </svg>
    </div>
  </div>

  <header>
    <button class="icon raised" aria-label="Kembali">
      <svg width="28" height="28" viewBox="0 0 28 28"><path d="M14 1L2 14l12 13M2 14h25" fill="none" stroke="#fff" stroke-width="3" /></svg>
    </button>
    <svg class="avatar" width="60" height="60" viewBox="0 0 60 60" role="img" aria-label="Foto profil">
      <defs>
        <clipPath id="round"><circle cx="30" cy="30" r="30" /></clipPath>
        <linearGradient id="gold" x1="0" y1="0" x2="0" y2="1">
          <stop offset="0" stop-color="#fbe27a" />
          <stop offset="1" stop-color="#e39a17" />
        </linearGradient>
      </defs>
      <g clip-path="url(#round)">
        <rect width="60" height="60" fill="#050505" />
        <path d="M0 0h60v14L30 24 0 14z" fill="#4a4b4d" />
        <path d="M0 14l30 11 30-11" fill="none" stroke="#e7a320" stroke-width="2" />
        <path d="M5 10q4 0 6-5l4-1q2 6-2 8l-7 3z" fill="#111" />
        <path d="M9 10l5-5 1 1-5 6z" fill="#e8e8e8" />
        <text x="18" y="9" class="tiny">BANDARTOGEL</text>
        <path d="M18 11h32" stroke="#b07c2a" stroke-width="1" />
        <text x="30" y="38" text-anchor="middle" class="brand">BANDAR TOGEL</text>
        <text x="30" y="45" text-anchor="middle" class="tagline"><tspan fill="#e7a320">★</tspan> ONLINE TERPERCAYA <tspan fill="#e7a320">★</tspan></text>
        <path d="M12 54.500h36" stroke="#c98a22" stroke-width="1" />
        <path d="M14 57.500h32" stroke="#b07a22" stroke-width="5" stroke-dasharray="2 1 4 1 1 1" />
      </g>
    </svg>
    <div class="who">
      <h1>+62 821-2326-2455</h1>
      <p>online</p>
    </div>
    <button class="icon call" aria-label="Panggilan">
      <svg width="34" height="34" viewBox="588 311 102 102">
        <path d="M593 318h20q5 0 5 5 0 13 4 24 1 4-2 7l-13 12q11 20 31 30l13-13q3-3 7-2 9 3 18 3 5 0 5 5v16q0 5-5 5-39 0-65-25-23-26-23-62 0-5 5-5z" fill="#fff" />
        <path d="M666 312v41M645 332h41" stroke="#fff" stroke-width="7" />
      </svg>
    </button>
    <button class="icon raised" aria-label="Opsi lainnya">
      <svg width="8" height="30" viewBox="0 0 8 30" fill="#fff"><circle cx="4" cy="5" r="3.700" /><circle cx="4" cy="15" r="3.700" /><circle cx="4" cy="25" r="3.700" /></svg>
    </button>
  </header>

  <main>
    <svg class="wallpaper" viewBox="0 167 720 1358" preserveAspectRatio="xMidYMin slice" aria-hidden="true">
      {#each tiles as tile}
        <g transform="translate({tile.x} {tile.y}) scale(.33333)">
          {#each tile.dots as [cx, cy, r]}
            <circle {cx} {cy} {r} />
          {/each}
          {#each tile.stars as s}
            <path d={starPath(s)} />
          {/each}
          {#each tile.sparkles as s}
            <path d={sparklePath(s)} />
          {/each}
          {#each tile.paths as d}
            <path {d} />
          {/each}
        </g>
      {/each}
      <text x="475" y="1236" font-size="46">Hi</text>
      <text x="434" y="1343" font-size="62" transform="rotate(-6 450 1330)">A</text>
      <text x="382" y="1326" font-size="56" class="cjk" transform="rotate(-6 410 1300)">文</text>
      <text x="532" y="1400" font-size="31" class="digits" transform="rotate(-16 532 1400)">09:28</text>
      <text x="681" y="215" font-size="50" transform="rotate(-8 690 200)">2</text>
    </svg>

    <div class="contact-actions">
      <button>BLOKIR</button>
      <span class="divider"></span>
      <button>TAMBAH</button>
    </div>

    <div class="chat">
      <div class="chip day">Hari ini</div>
      <div class="chip secure">
        <svg width="17" height="20" viewBox="0 0 17 20" aria-hidden="true">
          <path d="M4 10V6q0-5 4.500-5T13 6v4" fill="none" stroke="#a99a5d" stroke-width="2" />
          <rect x="1" y="9" width="15" height="10" rx="2" fill="#fbd85f" />
        </svg>
        Pesan dan panggilan terenkripsi secara end-to-end.<br />Tidak seorang pun di luar chat ini, termasuk WhatsApp, yang
        dapat membaca atau mendengarkannya. Ketuk untuk info selengkapnya.
      </div>
      <div class="chip business">Chat ini dengan akun bisnis. Ketuk untuk info selengkapnya.</div>

      <div class="messages">
        {#each messages as m}
          <div class="bubble" class:first={m.first}>
            {m.text}
            <span class="meta">
              {m.time}
              <svg width="28" height="18" viewBox="0 0 28 18" aria-hidden="true">
                <path d="M1 10l6 6.500L19 1M12 14.500l2.500 2L27 1" fill="none" stroke="currentColor" stroke-width="2.500" />
              </svg>
            </span>
          </div>
        {/each}
      </div>
    </div>

    <form class="composer" onsubmit={(e) => e.preventDefault()}>
      <div class="field">
        <button type="button" class="icon" aria-label="Emoji">
          <svg width="36" height="36" viewBox="0 0 36 36">
            <circle cx="18" cy="18" r="17.500" fill="#a3a8ab" />
            <g fill="#2d373e">
              <ellipse cx="12.500" cy="13.500" rx="2.800" ry="3.500" />
              <ellipse cx="23.500" cy="13.500" rx="2.800" ry="3.500" />
              <path d="M6.500 19.500h23q-1 11-11.500 11T6.500 19.500z" />
            </g>
            <path d="M10 22.500h16q-1 2.500-8 2.500t-8-2.500z" fill="#a3a8ab" />
          </svg>
        </button>
        <input type="text" placeholder="Ketik pesan" aria-label="Ketik pesan" bind:value={draft} />
        <button type="button" class="icon" aria-label="Lampirkan">
          <svg width="36" height="34" viewBox="0 0 36 34">
            <g transform="rotate(42 18 17)" fill="none" stroke="#868d92" stroke-width="2.400" stroke-linecap="round">
              <path d="M15 9H4q-5 0-5 6.500T4 23h24q8 0 8-7.500T28 8H15" transform="translate(1 1)" />
              <path d="M10 13.500h17q3 0 3 3t-3 3H12" />
            </g>
          </svg>
        </button>
        <button type="button" class="icon camera" aria-label="Kamera">
          <svg width="36" height="32" viewBox="0 0 36 32">
            <path d="M11 3q2-3 4-3h6q2 0 4 3l2 2h4q5 0 5 5v17q0 5-5 5H5q-5 0-5-5V10q0-5 5-5h4z" fill="#a3a8ab" />
            <circle cx="18" cy="17" r="7.500" fill="none" stroke="#2d373e" stroke-width="2.500" />
          </svg>
        </button>
      </div>
      <button type="button" class="mic" aria-label="Rekam pesan suara">
        <svg width="26" height="36" viewBox="0 0 26 36">
          <rect x="8" y="0" width="10" height="21" rx="5" fill="#fff" />
          <path d="M2 16q0 10 11 10t11-10M13 26v9" fill="none" stroke="#fff" stroke-width="3.500" stroke-linecap="round" />
        </svg>
      </button>
    </form>
  </main>

  <nav>
    <button class="icon" aria-label="Aplikasi terbaru">
      <svg width="22" height="22" viewBox="0 0 22 22"><path d="M1 2h20M1 11h20M1 20h20" /></svg>
    </button>
    <button class="icon" aria-label="Beranda">
      <svg width="22" height="22" viewBox="0 0 22 22"><rect x="2" y="2" width="18" height="18" rx="4" /></svg>
    </button>
    <button class="icon" aria-label="Kembali ke layar sebelumnya">
      <svg width="22" height="22" viewBox="0 0 22 22"><path d="M19 1q2-1 2 1v18q0 2-2 1L2 12.500q-2-1.500 0-3z" /></svg>
    </button>
  </nav>
</div>

<style>
  :global(body) {
    margin: 0;
    background: #06171f;
  }
  .screen {
    display: flex;
    flex-direction: column;
    min-height: 100vh;
    font-family: Roboto, 'Liberation Sans', sans-serif;
  }
  button {
    border: none;
    background: none;
    padding: 0;
    font-family: inherit;
    cursor: pointer;
  }
  svg {
    display: block;
    flex: none;
  }
  .icon {
    flex: none;
  }

  .status {
    display: flex;
    justify-content: space-between;
    align-items: center;
    height: 54px;
    padding: 18px 38px 0 104px;
    background: #0f1d24;
    color: #fff;
  }
  .clock {
    font-size: 23px;
  }
  .status-icons {
    display: flex;
    gap: 9px;
  }
  .net {
    font-size: 11px;
    font-weight: 500;
    fill: #fff;
  }
  .charge {
    font-size: 16px;
    fill: #fff;
  }

  header {
    display: flex;
    align-items: center;
    height: 95px;
    padding: 0 34px 0 14px;
    background: #232d36;
  }
  .raised {
    padding-bottom: 3px;
  }
  .avatar {
    margin: 0 14px 0 6px;
  }
  .brand {
    font-size: 7px;
    font-weight: 700;
    fill: url(#gold);
  }
  .tagline {
    font-size: 4px;
    font-weight: 700;
    fill: #eee;
  }
  .tiny {
    font-size: 4px;
    fill: #ddd;
  }
  .who {
    flex: 1;
    padding-top: 4px;
  }
  h1 {
    margin: 0;
    font-size: 31px;
    line-height: 38px;
    font-weight: 700;
    color: #d5d8da;
  }
  .who p {
    margin: 0;
    font-size: 22px;
    line-height: 34px;
    color: #e9ebec;
  }
  .call {
    margin-right: 48px;
  }

  main {
    position: relative;
    isolation: isolate;
    flex: 1;
    display: flex;
    flex-direction: column;
    background: #06171f;
  }
  .wallpaper {
    position: absolute;
    inset: 0;
    z-index: -1;
    width: 100%;
    height: 100%;
    fill: none;
    stroke: #182a31;
    stroke-width: 6;
    stroke-linejoin: round;
    stroke-linecap: round;
  }
  .wallpaper text {
    font-family: Roboto, sans-serif;
    font-weight: 700;
    stroke-width: 2;
  }
  .wallpaper .cjk {
    font-family: 'Noto Sans CJK SC', sans-serif;
  }
  .wallpaper .digits {
    font-family: 'Liberation Mono', monospace;
    stroke-width: 1;
  }

  .contact-actions {
    display: flex;
    align-items: center;
    height: 81px;
    background: rgba(14, 17, 15, 0.6);
  }
  .contact-actions button {
    flex: 1;
    height: 81px;
    padding-top: 4px;
    font-size: 22px;
    font-weight: 700;
    color: #d0d3d4;
  }
  .divider {
    width: 2px;
    height: 54px;
    background: #fff;
  }

  .chat {
    flex: 1;
    display: flex;
    flex-direction: column;
    align-items: center;
    padding-top: 12px;
  }
  .chip {
    padding: 12px 14px 9px;
    border-radius: 13px;
    background: #222d34;
    font-size: 22px;
    line-height: 26px;
    text-align: center;
  }
  .day {
    font-weight: 700;
    color: #999fa2;
  }
  .secure {
    margin: 14px 38px 15px;
    color: #f3d774;
  }
  .secure svg {
    display: inline-block;
    margin-right: 2px;
    vertical-align: -2px;
  }
  .business {
    color: #65f0cf;
  }

  .messages {
    align-self: stretch;
    display: flex;
    flex-direction: column;
    align-items: flex-end;
    gap: 4px;
    padding: 16px 27px 0 96px;
  }
  .bubble {
    display: flow-root;
    padding: 10px 16px 6px;
    border-radius: 20px;
    background: #07463f;
    color: #d3e2df;
    font-size: 27px;
    line-height: 32px;
  }
  .first {
    position: relative;
    border-top-right-radius: 0;
  }
  .first::after {
    content: '';
    position: absolute;
    top: 0;
    left: 100%;
    width: 13px;
    height: 18px;
    background: #07463f;
    border-top-right-radius: 3px;
    clip-path: polygon(0 0, 100% 0, 100% 4px, 0 100%);
  }
  .meta {
    float: right;
    display: flex;
    align-items: center;
    gap: 7px;
    margin: 15px 0 0 15px;
    font-size: 19px;
    line-height: 24px;
    color: #86a9a3;
  }

  .composer {
    display: flex;
    align-items: flex-start;
    gap: 10px;
    padding: 0 8px 8px;
  }
  .field {
    flex: 1;
    display: flex;
    align-items: center;
    min-width: 0;
    height: 78px;
    box-sizing: border-box;
    padding: 2px 22px 0 18px;
    border-radius: 39px;
    background: #2d373e;
  }
  input {
    flex: 1;
    min-width: 0;
    height: 42px;
    margin: 0 20px;
    padding: 0;
    border: none;
    border-left: 3px solid #12b09d;
    outline: none;
    background: none;
    color: #d3e2df;
    font-family: inherit;
    font-size: 30px;
  }
  input::placeholder {
    color: #7d858a;
    opacity: 1;
  }
  .camera {
    margin-left: 39px;
  }
  .mic {
    display: grid;
    place-items: center;
    width: 80px;
    height: 80px;
    border-radius: 50%;
    background: #04b09e;
  }

  nav {
    display: flex;
    justify-content: center;
    align-items: center;
    gap: 143px;
    height: 75px;
    background: #fafafa;
  }
  nav svg {
    fill: none;
    stroke: #b4b4b4;
    stroke-width: 2;
  }
</style>
